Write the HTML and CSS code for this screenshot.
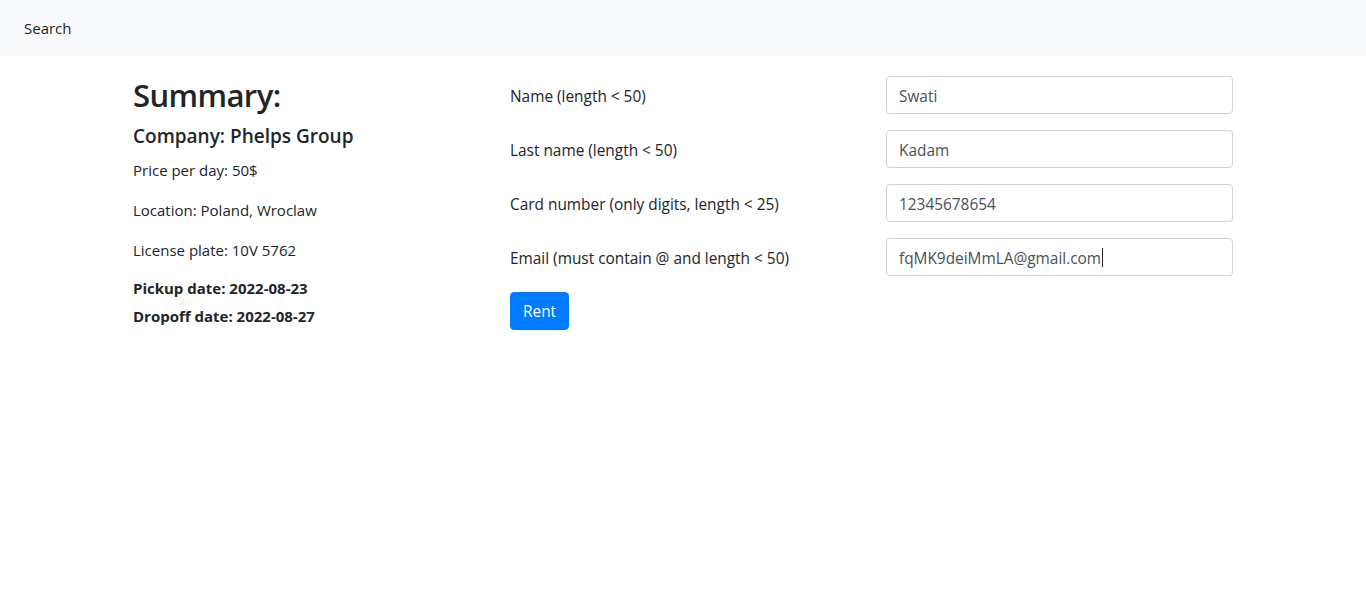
FILE: index.html
```html
<!DOCTYPE html>
<html lang="en">
<head>
<meta charset="utf-8">
<title>Summary</title>
<link rel="stylesheet" href="styles.css">
</head>
<body>
<nav class="navbar">
  <a class="nav-link" href="#">Search</a>
</nav>
<main class="page">
  <section class="summary">
    <h2 class="title">Summary:</h2>
    <h5 class="company">Company: Phelps Group</h5>
    <p class="line">Price per day: 50$</p>
    <p class="line">Location: Poland, Wroclaw</p>
    <p class="line">License plate: 10V 5762</p>
    <h6 class="date">Pickup date: 2022-08-23</h6>
    <h6 class="date">Dropoff date: 2022-08-27</h6>
  </section>
  <form class="rent-form">
    <div class="form-row">
      <label class="form-label" for="name">Name (length &lt; 50)</label>
      <input class="form-control" id="name" type="text" value="Swati">
    </div>
    <div class="form-row">
      <label class="form-label" for="lastname">Last name (length &lt; 50)</label>
      <input class="form-control" id="lastname" type="text" value="Kadam">
    </div>
    <div class="form-row">
      <label class="form-label" for="card">Card number (only digits, length &lt; 25)</label>
      <input class="form-control" id="card" type="text" value="12345678654">
    </div>
    <div class="form-row">
      <label class="form-label" for="email">Email (must contain @ and length &lt; 50)</label>
      <div class="input-wrap">
        <input class="form-control" id="email" type="text" value="fqMK9deiMmLA@gmail.com">
        <span class="caret"></span>
      </div>
    </div>
    <div class="actions">
      <button class="btn" type="button">Rent</button>
    </div>
  </form>
</main>
</body>
</html>
```

FILE: styles.css
```css
* { box-sizing: border-box; }

html, body {
  margin: 0;
  padding: 0;
  background: #fff;
}

body {
  font-family: "Open Sans", "Noto Sans", "Liberation Sans", sans-serif;
  font-size: 16px;
  line-height: 1.5;
  color: #212529;
}

.navbar {
  height: 56px;
  background: #f8f9fa;
  display: flex;
  align-items: center;
  padding: 0 16px;
}

.nav-link {
  padding: 8px;
  color: rgba(0, 0, 0, 0.9);
  text-decoration: none;
  font-size: 15px;
}

.page {
  width: 1100px;
  margin: 0 auto;
  padding-top: 20px;
  display: grid;
  grid-template-columns: 347px 723px;
  column-gap: 30px;
  align-items: start;
}

.title {
  margin: 0 0 10px;
  font-size: 31px;
  font-weight: 600;
  line-height: 38px;
  letter-spacing: -0.6px;
}

.company {
  margin: 0 0 10px;
  font-size: 19px;
  font-weight: 600;
  line-height: 24px;
}

.line {
  margin: 0 0 16px;
  font-size: 15px;
  line-height: 24px;
}

.date {
  margin: 0 0 8px;
  font-size: 15px;
  font-weight: 700;
  line-height: 20px;
}

.rent-form {
  display: flex;
  flex-direction: column;
}

.form-row {
  display: grid;
  grid-template-columns: 347px 347px;
  column-gap: 29px;
  align-items: center;
  margin-bottom: 16px;
}

.form-label {
  font-size: 15.4px;
  line-height: 24px;
  padding-top: 3px;
}

.input-wrap {
  position: relative;
}

.form-control {
  display: block;
  width: 100%;
  height: 38px;
  padding: 7px 12px 5px;
  font-family: inherit;
  font-size: 15.4px;
  line-height: 1.5;
  color: #495057;
  background: #fff;
  border: 1px solid #ced4da;
  border-radius: 4px;
}

.caret {
  position: absolute;
  left: 216px;
  top: 10px;
  width: 1px;
  height: 19px;
  background: #212529;
}

.actions {
  display: flex;
}

.btn {
  height: 38px;
  padding: 7px 12px 5px;
  font-family: inherit;
  font-size: 15.4px;
  line-height: 1.5;
  color: #fff;
  background: #007bff;
  border: 1px solid #007bff;
  border-radius: 4px;
}
```
